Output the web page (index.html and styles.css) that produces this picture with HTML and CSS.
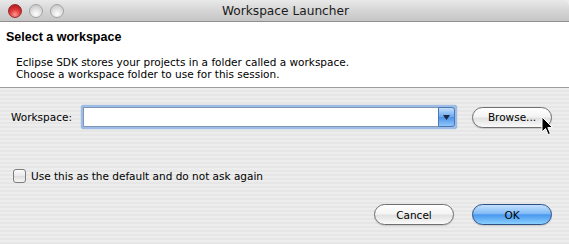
FILE: index.html
```html
<!DOCTYPE html>
<html lang="en">
<head>
    <meta charset="UTF-8">
    <title>Workspace Launcher</title>
    <link rel="stylesheet" href="styles.css">
</head>
<body>

    <div class="window">
        <!-- Title bar -->
        <div class="titlebar">
            <div class="lights">
                <span class="light close"></span>
                <span class="light"></span>
                <span class="light"></span>
            </div>
            <div class="title">Workspace Launcher</div>
        </div>

        <!-- Header -->
        <div class="header">
            <h2>Select a workspace</h2>
            <p>Eclipse SDK stores your projects in a folder called a workspace.<br>
               Choose a workspace folder to use for this session.</p>
        </div>

        <!-- Content -->
        <div class="content">
            <div class="ws-row">
                <label class="ws-label">Workspace:</label>
                <div class="combo">
                    <div class="combo-field"></div>
                    <div class="combo-arrow">
                        <svg width="7" height="5" viewBox="0 0 7 5"><path d="M0 0 H7 L3.5 5 Z" fill="#1b2a44"/></svg>
                    </div>
                </div>
                <div class="btn-wrap">
                    <button class="btn">Browse...</button>
                    <svg class="cursor" width="13" height="20" viewBox="0 0 13 20">
                        <path d="M1 1 V16 L4.5 12.5 L7.2 18.6 L9.4 17.6 L6.8 11.6 H11.6 Z" fill="#000" stroke="#fff" stroke-width="1"/>
                    </svg>
                </div>
            </div>

            <label class="check-row">
                <span class="checkbox"></span>
                Use this as the default and do not ask again
            </label>

            <div class="actions">
                <button class="btn">Cancel</button>
                <button class="btn primary">OK</button>
            </div>
        </div>
    </div>

</body>
</html>
```

FILE: styles.css
```css
* {
    margin: 0;
    padding: 0;
    box-sizing: border-box;
}

body {
    font-family: 'DejaVu Sans', sans-serif;
    font-size: 11px;
    color: #000;
    background: #ececec;
    width: 569px;
    height: 244px;
    overflow: hidden;
}

.window {
    width: 569px;
    height: 244px;
    display: flex;
    flex-direction: column;
}

/* Title bar */
.titlebar {
    height: 22px;
    position: relative;
    background: linear-gradient(#e9e9e9, #d2d2d2 60%, #c6c6c6);
    border-bottom: 1px solid #8f8f8f;
    border-top-right-radius: 6px;
    display: flex;
    align-items: center;
    justify-content: center;
}

.lights {
    position: absolute;
    left: 8px;
    top: 4px;
    display: flex;
    gap: 7px;
}

.light {
    width: 14px;
    height: 14px;
    border-radius: 50%;
    border: 1px solid #a3a3a3;
    background: radial-gradient(circle at 50% 75%, #ffffff 0%, #e2e2e2 45%, #bdbdbd 100%);
}

.light.close {
    border-color: #9b2a2a;
    background: radial-gradient(circle at 50% 80%, #ff9b8f 0%, #e0393a 45%, #a01418 100%);
}

.title {
    font-size: 12.2px;
    color: #1a1a1a;
    padding-left: 2px;
}

/* Header */
.header {
    background: #fff;
    height: 66px;
    border-bottom: 1px solid #9d9d9d;
    padding: 7px 0 0 6px;
}

.header h2 {
    font-family: 'Liberation Sans', Arial, sans-serif;
    font-size: 12.5px;
    font-weight: bold;
    line-height: 16px;
}

.header p {
    font-size: 10.5px;
    line-height: 12px;
    margin: 11px 0 0 10px;
}

/* Content */
.content {
    flex: 1;
    background: repeating-linear-gradient(#ededed 0, #ededed 2px, #e6e6e6 2px, #e6e6e6 4px);
    padding: 17px 0 0 0;
}

.ws-row {
    display: flex;
    align-items: center;
    height: 24px;
}

.ws-label {
    width: 81px;
    padding-left: 11px;
    font-size: 10.5px;
}

.combo {
    width: 376px;
    height: 24px;
    display: flex;
    border-radius: 3px;
    padding: 2px;
    background: #9dbde6;
    box-shadow: 0 0 1px #5d85be;
}

.combo-field {
    flex: 1;
    background: #fff;
    border: 1px solid #7e95b8;
    border-right: none;
}

.combo-arrow {
    width: 17px;
    border-radius: 0 3px 3px 0;
    border: 1px solid #4d77b3;
    background: linear-gradient(#c3defa, #6aa8ee 50%, #4b91e6 51%, #8fc7fb);
    display: flex;
    align-items: center;
    justify-content: center;
}

.btn-wrap {
    position: relative;
    margin-left: 15px;
}

.btn {
    font-family: inherit;
    font-size: 10.5px;
    color: #000;
    width: 80px;
    height: 21px;
    border: 1px solid #6f6f6f;
    border-radius: 11px;
    background: linear-gradient(#ffffff, #f4f4f4 45%, #e2e2e2 55%, #fafafa);
    box-shadow: 0 1px 1px rgba(0, 0, 0, 0.15);
}

.btn.primary {
    border-color: #2d4f86;
    background: linear-gradient(#c4e0fd, #82bbf7 45%, #4a97ee 52%, #8ad0ff);
}

.cursor {
    position: absolute;
    left: 69px;
    top: 9px;
}

.check-row {
    display: flex;
    align-items: center;
    gap: 5px;
    margin: 40px 0 0 13px;
    font-size: 10.5px;
    height: 14px;
}

.checkbox {
    width: 13px;
    height: 14px;
    border: 1px solid #7d7d7d;
    border-radius: 3px;
    background: linear-gradient(#fbfbfb, #e9e9e9 50%, #dcdcdc 51%, #f7f7f7);
}

.actions {
    display: flex;
    justify-content: flex-end;
    gap: 18px;
    padding-right: 17px;
    margin-top: 21px;
}
```
